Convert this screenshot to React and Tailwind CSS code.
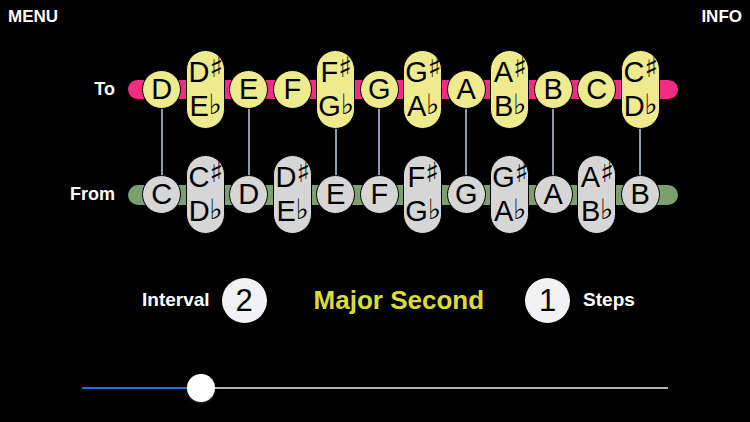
const TOP = [
  { n: 'D' },
  { s: 'D', f: 'E' },
  { n: 'E' },
  { n: 'F' },
  { s: 'F', f: 'G' },
  { n: 'G' },
  { s: 'G', f: 'A' },
  { n: 'A' },
  { s: 'A', f: 'B' },
  { n: 'B' },
  { n: 'C' },
  { s: 'C', f: 'D' },
];

const BOTTOM = [
  { n: 'C' },
  { s: 'C', f: 'D' },
  { n: 'D' },
  { s: 'D', f: 'E' },
  { n: 'E' },
  { n: 'F' },
  { s: 'F', f: 'G' },
  { n: 'G' },
  { s: 'G', f: 'A' },
  { n: 'A' },
  { s: 'A', f: 'B' },
  { n: 'B' },
];

function Note({ note, color }) {
  if (note.n) {
    return (
      <div
        className={`relative z-10 flex h-[39px] w-[39px] items-center justify-center rounded-full border-[1.5px] border-black text-[29px] leading-none text-black ${color}`}
      >
        {note.n}
      </div>
    );
  }
  return (
    <div
      className={`relative z-10 flex h-[79px] w-[39px] flex-col items-center justify-center gap-[12px] rounded-full border-[1.5px] border-black text-black ${color}`}
    >
      <div className="flex h-[22px] items-start pl-[1px]">
        <span className="text-[29px] leading-[22px]">{note.s}</span>
        <span className="-translate-y-[4px] font-['DejaVu_Sans',sans-serif] text-[28px] leading-[22px] [font-variant-emoji:text]">♯</span>
      </div>
      <div className="flex h-[22px] items-end pl-[1px]">
        <span className="text-[29px] leading-[22px]">{note.f}</span>
        <span className="-translate-y-[1px] font-['DejaVu_Sans',sans-serif] text-[28px] leading-[22px] [font-variant-emoji:text]">♭</span>
      </div>
    </div>
  );
}

function NumberBubble({ value }) {
  return (
    <div className="flex h-[45px] w-[45px] items-center justify-center rounded-full bg-[#f2f2f4] text-[31px] leading-none text-black">
      {value}
    </div>
  );
}

export default function App() {
  return (
    <div className="relative h-[422px] w-[750px] overflow-hidden bg-black font-['Liberation_Sans',Arial,sans-serif] text-white">
      {/* header */}
      <div className="flex h-[49px] items-start justify-between px-[8px] pt-[7px] text-[17px] font-bold leading-5">
        <span>MENU</span>
        <span>INFO</span>
      </div>

      {/* note rows */}
      <div className="flex">
        <div className="flex w-[115px] flex-col items-end text-[18px] font-bold">
          <div className="flex h-[80px] items-center">To</div>
          <div className="h-[25px]" />
          <div className="flex h-[80px] items-center">From</div>
        </div>

        <div className="relative ml-[25px] flex w-[522px]">
          <div className="absolute left-[-12px] right-[-16px] top-[31px] h-[19px] rounded-full bg-[#ee2d83]" />
          <div className="absolute left-[-12px] right-[-16px] top-[136px] h-[20px] rounded-full bg-[#7ba06d]" />
          {TOP.map((top, i) => {
            const bottom = BOTTOM[i];
            return (
              <div key={i} className="relative flex w-[43.5px] flex-col items-center">
                {bottom.n && (
                  <div className="absolute left-1/2 top-[40px] h-[105px] w-[2px] -translate-x-1/2 bg-[#8a9bb1]" />
                )}
                <div className="flex h-[80px] items-center justify-center">
                  <Note note={top} color="bg-[#eeea8e]" />
                </div>
                <div className="h-[25px]" />
                <div className="flex h-[80px] items-center justify-center">
                  <Note note={bottom} color="bg-[#d6d6d6]" />
                </div>
              </div>
            );
          })}
        </div>
      </div>

      {/* interval info */}
      <div className="mt-[43px] flex h-[46px] items-center pl-[142px]">
        <span className="text-[19px] font-bold">Interval</span>
        <div className="ml-[12px]">
          <NumberBubble value="2" />
        </div>
        <span className="ml-[47px] text-[26px] font-bold text-[#d9dc3a]">Major Second</span>
        <div className="ml-[41px]">
          <NumberBubble value="1" />
        </div>
        <span className="ml-[13px] text-[19px] font-bold">Steps</span>
      </div>

      {/* slider */}
      <div className="relative ml-[82px] mt-[51px] flex h-[28px] w-[586px] items-center">
        <div className="h-[2px] w-[119px] bg-[#1f6fd6]" />
        <div className="h-[2px] flex-1 bg-[#b3b3b3]" />
        <div className="absolute left-[105px] top-0 h-[28px] w-[28px] rounded-full bg-white shadow-[0_1px_3px_rgba(255,255,255,0.2)]" />
      </div>
    </div>
  );
}
